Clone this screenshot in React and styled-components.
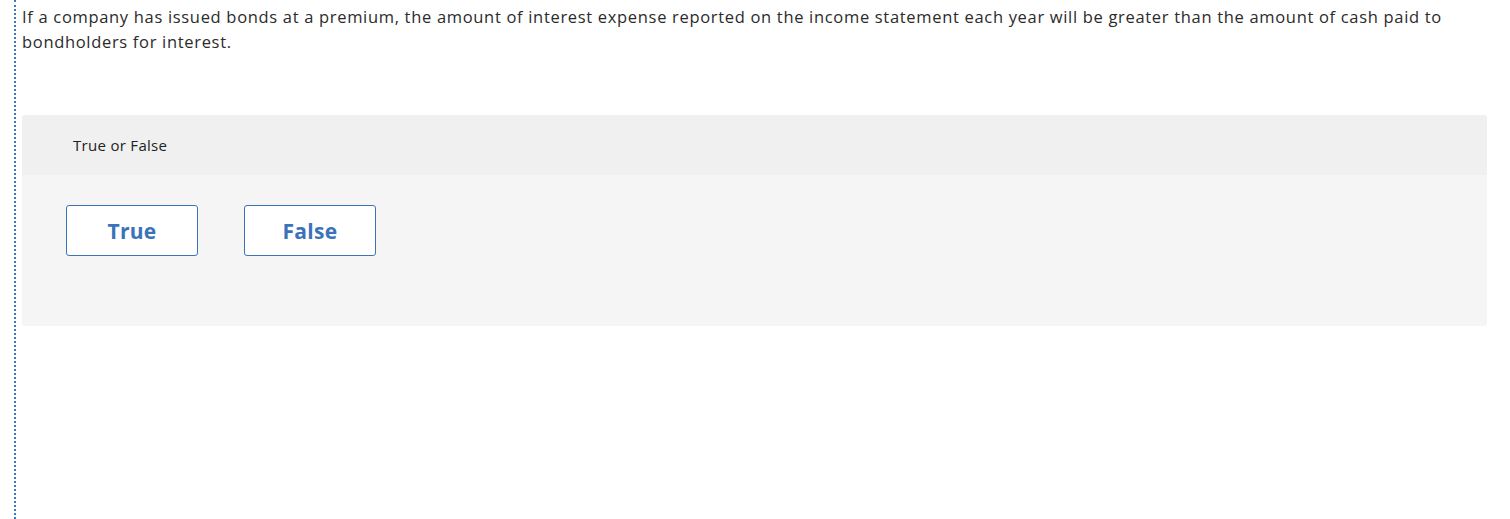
import React from 'react';
import styled, { createGlobalStyle } from 'styled-components';

const GlobalStyle = createGlobalStyle`
  body {
    margin: 0;
    background: #fff;
    font-family: 'Open Sans', 'Liberation Sans', sans-serif;
  }
`;

const Page = styled.div`
  padding-left: 14px;
  min-height: 519px;
`;

const Frame = styled.div`
  border-left: 2px dotted #3b78c2;
  min-height: 519px;
  padding: 4px 23px 0 6px;
  box-sizing: border-box;
`;

const Question = styled.p`
  margin: 0;
  font-size: 16.5px;
  letter-spacing: 0.68px;
  line-height: 25px;
  color: #2b2b2b;
`;

const Panel = styled.div`
  margin-top: 61px;
  border-radius: 3px;
  background: #f5f5f5;
  overflow: hidden;
`;

const PanelHeader = styled.div`
  height: 60px;
  background: #f0f0f0;
  display: flex;
  align-items: center;
  padding-left: 51px;
  font-size: 15px;
  letter-spacing: 0.3px;
  color: #222;
`;

const Choices = styled.div`
  display: flex;
  gap: 46px;
  padding: 30px 44px 70px;
`;

const Choice = styled.button`
  width: 132px;
  height: 51px;
  background: #fff;
  border: 1px solid #3b73b9;
  border-radius: 3px;
  color: #3b73b9;
  font-family: inherit;
  font-size: 21px;
  letter-spacing: 0.3px;
  font-weight: 700;
  cursor: pointer;
`;

export default function App() {
  return (
    <>
      <GlobalStyle />
      <Page>
        <Frame>
          <Question>
            If a company has issued bonds at a premium, the amount of interest expense reported on the income statement each year will be greater than the amount of cash paid to bondholders for interest.
          </Question>
          <Panel>
            <PanelHeader>True or False</PanelHeader>
            <Choices>
              <Choice>True</Choice>
              <Choice>False</Choice>
            </Choices>
          </Panel>
        </Frame>
      </Page>
    </>
  );
}
